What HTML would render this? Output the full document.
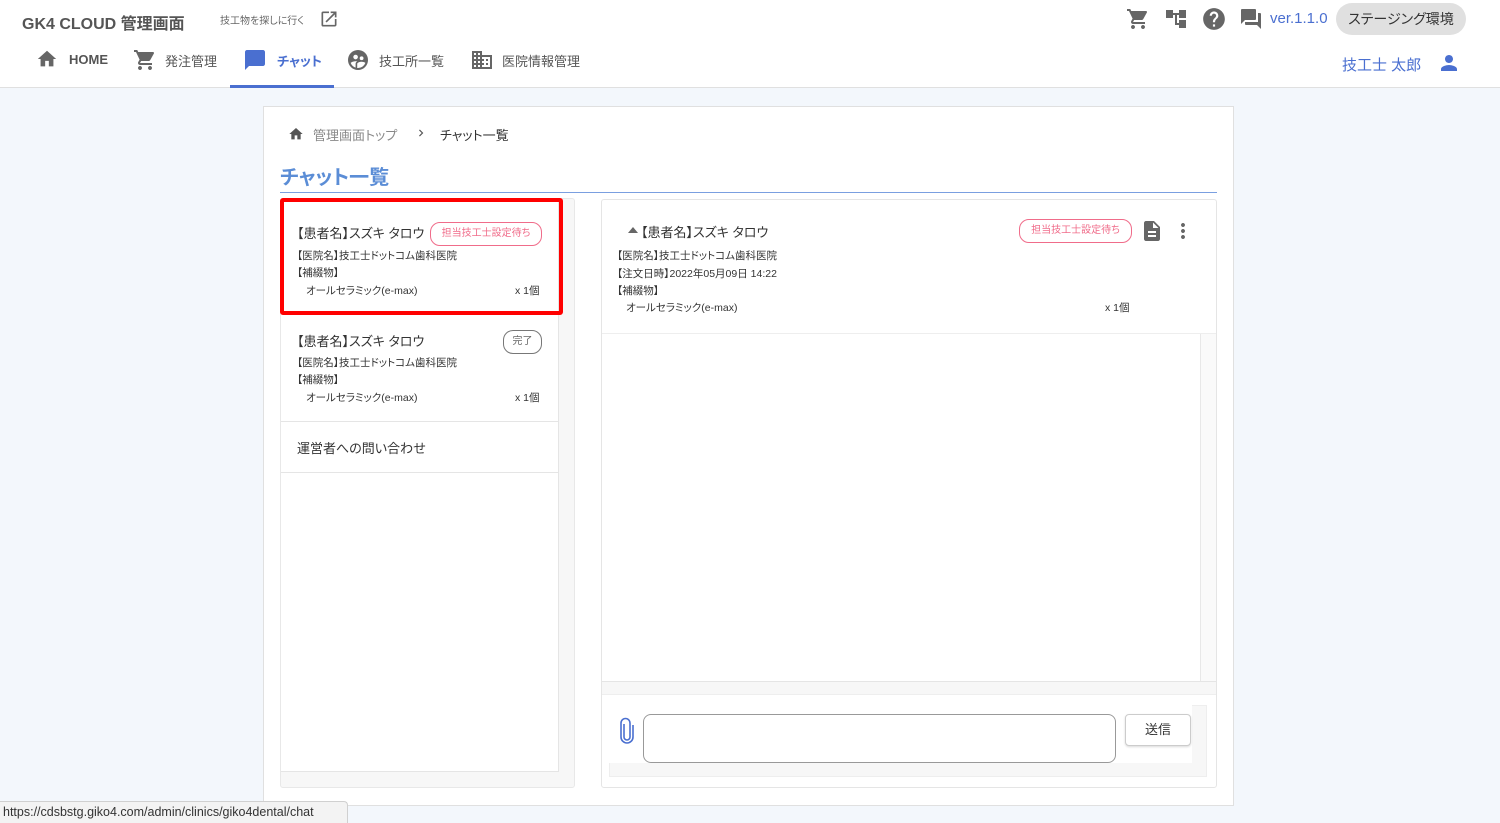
<!DOCTYPE html>
<html><head><meta charset="utf-8"><style>
*{box-sizing:border-box;margin:0;padding:0}
body{width:1500px;height:823px;overflow:hidden;background:#f3f7fc;font-family:"Liberation Sans","Noto Sans CJK JP",sans-serif;color:#333;position:relative;font-feature-settings:"palt"}
.a{position:absolute}
.hdr{left:0;top:0;width:1500px;height:88px;background:#fff;border-bottom:1px solid #e0e0e0}
.nav{font-size:13px;color:#555;display:flex;align-items:center;gap:8px}
.nav svg{fill:#666}
.t{font-size:10.5px;color:#333;white-space:nowrap}
.badge{border:1px solid #f06c8a;color:#f06c8a;border-radius:10px;font-size:10px;text-align:center;line-height:22px}
.n{font-size:13px;white-space:nowrap}
</style></head><body>
<div class="a hdr"></div>
<div class="a" style="left:22px;top:10px;font-size:16px;font-weight:bold;color:#555">GK4 CLOUD 管理画面</div>
<div class="a" style="left:220px;top:12px;font-size:10px;color:#666">技工物を探しに行く</div>
<svg class="a" style="left:319px;top:9px" width="20" height="20" viewBox="0 0 24 24"><path fill="#666" d="M19 19H5V5h7V3H5a2 2 0 0 0-2 2v14a2 2 0 0 0 2 2h14c1.1 0 2-.9 2-2v-7h-2v7zM14 3v2h3.59l-9.83 9.83 1.41 1.41L19 6.41V10h2V3h-7z"/></svg>

<div class="a nav" style="left:36px;top:48px;font-weight:bold"><svg width="22" height="22" viewBox="0 0 24 24"><path d="M10 20v-6h4v6h5v-8h3L12 3 2 12h3v8z"/></svg><span style="margin-left:3px">HOME</span></div>
<div class="a nav" style="left:133px;top:48px"><svg width="24" height="24" viewBox="0 0 24 24"><path d="M7 18c-1.1 0-2 .9-2 2s.9 2 2 2 2-.9 2-2-.9-2-2-2zM1 2v2h2l3.6 7.59-1.35 2.45C4.52 15.37 5.48 17 7 17h12v-2H7l1.1-2h7.45c.75 0 1.41-.41 1.75-1.03l3.58-6.49A1 1 0 0 0 20 4H5.21l-.94-2H1zm16 16c-1.1 0-2 .9-2 2s.9 2 2 2 2-.9 2-2-.9-2-2-2z"/></svg><span>発注管理</span></div>
<div class="a nav" style="left:243px;top:48px;color:#4a6fd0;font-weight:bold"><svg width="24" height="24" viewBox="0 0 24 24" style="fill:#4a6fd0"><path d="M20 2H4c-1.1 0-2 .9-2 2v18l4-4h14c1.1 0 2-.9 2-2V4c0-1.1-.9-2-2-2z"/></svg><span style="margin-left:2px">チャット</span></div>
<div class="a" style="left:230px;top:85px;width:104px;height:3px;background:#4a6fd0"></div>
<div class="a nav" style="left:346px;top:48px"><svg width="24" height="24" viewBox="0 0 24 24"><path d="M12 2a10 10 0 1 0 0 20 10 10 0 0 0 0-20zm3.6 6.34a1.9 1.9 0 1 1 0 3.8 1.9 1.9 0 0 1 0-3.8zM9.6 6.76a2.3 2.3 0 1 1 0 4.6 2.3 2.3 0 0 1 0-4.6zm0 9.13v3.75A8 8 0 0 1 4.670 14.9c1.05-1.12 3.67-1.69 4.930-1.69.45 0 1.02.07 1.62.19-1.4.74-1.62 1.72-1.62 2.49zM12 20c-.27 0-.53-.01-.79-.04v-4.07c0-1.42 2.94-2.13 4.39-2.13 1.06 0 2.9.39 3.81 1.140A8 8 0 0 1 12 20z"/></svg><span style="margin-left:1px">技工所一覧</span></div>
<div class="a nav" style="left:470px;top:48px"><svg width="24" height="24" viewBox="0 0 24 24"><path d="M12 7V3H2v18h20V7H12zM6 19H4v-2h2v2zm0-4H4v-2h2v2zm0-4H4V9h2v2zm0-4H4V5h2v2zm4 12H8v-2h2v2zm0-4H8v-2h2v2zm0-4H8V9h2v2zm0-4H8V5h2v2zm10 12h-8v-2h2v-2h-2v-2h2v-2h-2V9h8v10zm-2-8h-2v2h2v-2zm0 4h-2v2h2v-2z"/></svg><span>医院情報管理</span></div>

<svg class="a" style="left:1126px;top:7px" width="24" height="24" viewBox="0 0 24 24"><path fill="#666" d="M7 18c-1.1 0-2 .9-2 2s.9 2 2 2 2-.9 2-2-.9-2-2-2zM1 2v2h2l3.6 7.59-1.35 2.45C4.52 15.37 5.48 17 7 17h12v-2H7l1.1-2h7.45c.75 0 1.41-.41 1.75-1.03l3.58-6.49A1 1 0 0 0 20 4H5.21l-.94-2H1zm16 16c-1.1 0-2 .9-2 2s.9 2 2 2 2-.9 2-2-.9-2-2-2z"/></svg>
<svg class="a" style="left:1164px;top:7px" width="24" height="24" viewBox="0 0 24 24"><path fill="#666" d="M22 11V3h-7v3H9V3H2v8h7V8h2v10h4v3h7v-8h-7v3h-2V8h2v3z"/></svg>
<svg class="a" style="left:1201px;top:6px" width="26" height="26" viewBox="0 0 24 24"><path fill="#666" d="M12 2C6.48 2 2 6.48 2 12s4.48 10 10 10 10-4.48 10-10S17.52 2 12 2zm1 17h-2v-2h2v2zm2.070-7.75l-.9.92C13.45 12.9 13 13.5 13 15h-2v-.5c0-1.1.45-2.1 1.17-2.83l1.24-1.26A2 2 0 0 0 12 7c-1.1 0-2 .9-2 2H8a4 4 0 0 1 8 0c0 .88-.36 1.68-.93 2.25z"/></svg>
<svg class="a" style="left:1239px;top:7px" width="24" height="24" viewBox="0 0 24 24"><path fill="#666" d="M21 6h-2v9H6v2c0 .55.45 1 1 1h11l4 4V7c0-.55-.45-1-1-1zm-4 6V3c0-.55-.45-1-1-1H3c-.55 0-1 .45-1 1v14l4-4h10c.55 0 1-.45 1-1z"/></svg>
<div class="a" style="left:1270px;top:10px;font-size:15px;color:#4a6fd0">ver.1.1.0</div>
<div class="a" style="left:1336px;top:3px;width:130px;height:32px;border-radius:16px;background:#e0e0e0;font-size:14px;text-align:center;line-height:32px;color:#333">ステージング環境</div>
<div class="a" style="left:1342px;top:54px;font-size:15px;color:#4a6fd0">技工士 太郎</div>
<svg class="a" style="left:1437px;top:51px" width="24" height="24" viewBox="0 0 24 24"><path fill="#4a6fd0" d="M12 12c2.21 0 4-1.79 4-4s-1.79-4-4-4-4 1.79-4 4 1.790 4 4 4zm0 2c-2.67 0-8 1.34-8 4v2h16v-2c0-2.66-5.33-4-8-4z"/></svg>

<div class="a" style="left:263px;top:106px;width:971px;height:700px;background:#fff;border:1px solid #e0e0e0"></div>
<svg class="a" style="left:288px;top:126px" width="16" height="16" viewBox="0 0 24 24"><path fill="#555" d="M10 20v-6h4v6h5v-8h3L12 3 2 12h3v8z"/></svg>
<div class="a" style="left:313px;top:125px;font-size:13px;color:#888">管理画面トップ</div>
<svg class="a" style="left:414px;top:126px" width="14" height="14" viewBox="0 0 24 24"><path fill="#555" d="M8.59 16.59 13.17 12 8.59 7.41 10 6l6 6-6 6z"/></svg>
<div class="a" style="left:440px;top:125px;font-size:13px;color:#333">チャット一覧</div>
<div class="a" style="left:280px;top:161px;font-size:20px;font-weight:bold;color:#5b8dd6">チャット一覧</div>
<div class="a" style="left:280px;top:192px;width:937px;height:1px;background:#7a9fe0"></div>

<!-- left panel -->
<div class="a" style="left:280px;top:198px;width:295px;height:590px;background:#f7f7f7;border:1px solid #e8e8e8;border-radius:3px"></div>
<div class="a" style="left:281px;top:199px;width:278px;height:573px;background:#fff;border-right:1px solid #e5e5e5;border-bottom:1px solid #e5e5e5"></div>
<div class="a" style="left:280px;top:198px;width:283px;height:117px;border:4px solid #f00;border-radius:3px"></div>
<div class="a n" style="left:297px;top:223px">【患者名】スズキ タロウ</div>
<div class="a badge" style="left:430px;top:222px;width:112px;height:24px">担当技工士設定待ち</div>
<div class="a t" style="left:297px;top:248px">【医院名】技工士ドットコム歯科医院</div>
<div class="a t" style="left:297px;top:265px">【補綴物】</div>
<div class="a t" style="left:306px;top:283px">オールセラミック(e-max)</div>
<div class="a t" style="left:515px;top:283px">x 1個</div>

<div class="a n" style="left:297px;top:331px">【患者名】スズキ タロウ</div>
<div class="a" style="left:503px;top:330px;width:39px;height:24px;border:1px solid #777;border-radius:10px;font-size:10px;color:#666;text-align:center;line-height:22px">完了</div>
<div class="a t" style="left:297px;top:355px">【医院名】技工士ドットコム歯科医院</div>
<div class="a t" style="left:297px;top:372px">【補綴物】</div>
<div class="a t" style="left:306px;top:390px">オールセラミック(e-max)</div>
<div class="a t" style="left:515px;top:390px">x 1個</div>
<div class="a" style="left:281px;top:421px;width:277px;height:1px;background:#e5e5e5"></div>
<div class="a n" style="left:297px;top:438px">運営者への問い合わせ</div>
<div class="a" style="left:281px;top:472px;width:277px;height:1px;background:#e5e5e5"></div>

<!-- right panel -->
<div class="a" style="left:601px;top:199px;width:616px;height:589px;background:#fff;border:1px solid #e5e5e5;border-radius:3px"></div>
<div class="a" style="left:602px;top:333px;width:614px;height:1px;background:#eee"></div>
<div class="a" style="left:1200px;top:334px;width:16px;height:347px;background:#fafafa;border-left:1px solid #e8e8e8"></div>
<div class="a" style="left:602px;top:681px;width:614px;height:14px;background:#f7f7f7;border-top:1px solid #e5e5e5;border-bottom:1px solid #eee"></div>
<div class="a" style="left:609px;top:705px;width:598px;height:72px;background:#f7f7f7;border:1px solid #eee"></div>
<div class="a" style="left:609px;top:705px;width:583px;height:58px;background:#fff"></div>
<div class="a" style="left:628px;top:227px;width:0;height:0;border-left:5px solid transparent;border-right:5px solid transparent;border-bottom:6px solid #666"></div>
<div class="a n" style="left:641px;top:222px">【患者名】スズキ タロウ</div>
<div class="a badge" style="left:1019px;top:219px;width:113px;height:24px">担当技工士設定待ち</div>
<svg class="a" style="left:1140px;top:219px" width="24" height="24" viewBox="0 0 24 24"><path fill="#666" d="M14 2H6c-1.1 0-2 .9-2 2v16c0 1.1.9 2 2 2h12c1.1 0 2-.9 2-2V8l-6-6zm2 16H8v-2h8v2zm0-4H8v-2h8v2zm-3-5V3.5L18.5 9H13z"/></svg>
<svg class="a" style="left:1171px;top:219px" width="24" height="24" viewBox="0 0 24 24"><path fill="#666" d="M12 8c1.1 0 2-.9 2-2s-.9-2-2-2-2 .9-2 2 .9 2 2 2zm0 2c-1.1 0-2 .9-2 2s.9 2 2 2 2-.9 2-2-.9-2-2-2zm0 6c-1.1 0-2 .9-2 2s.9 2 2 2 2-.9 2-2-.9-2-2-2z"/></svg>
<div class="a t" style="left:617px;top:248px">【医院名】技工士ドットコム歯科医院</div>
<div class="a t" style="left:617px;top:266px">【注文日時】2022年05月09日 14:22</div>
<div class="a t" style="left:617px;top:283px">【補綴物】</div>
<div class="a t" style="left:626px;top:300px">オールセラミック(e-max)</div>
<div class="a t" style="left:1105px;top:300px">x 1個</div>
<svg class="a" style="left:617px;top:717px" width="20" height="28" viewBox="0 0 20 28"><path fill="none" stroke="#4a6fd0" stroke-width="1.6" d="M7 7v13a3 3 0 0 0 6 0V6a4.5 4.5 0 0 0-9 0v14a6 6 0 0 0 12 0V8"/></svg>
<div class="a" style="left:643px;top:714px;width:473px;height:49px;border:1px solid #999;border-radius:8px;background:#fff"></div>
<div class="a" style="left:1125px;top:714px;width:66px;height:32px;border:1px solid #ccc;border-radius:4px;background:#fff;font-size:13px;text-align:center;line-height:30px;box-shadow:0 1px 2px rgba(0,0,0,.15)">送信</div>

<div class="a" style="left:0;top:801px;width:348px;height:22px;background:#f3f3f3;border:1px solid #d0d0d0;border-left:none;border-bottom:none;border-top-right-radius:4px;font-size:12.5px;color:#333;line-height:21px;padding-left:3px">https://cdsbstg.giko4.com/admin/clinics/giko4dental/chat</div>
</body></html>
